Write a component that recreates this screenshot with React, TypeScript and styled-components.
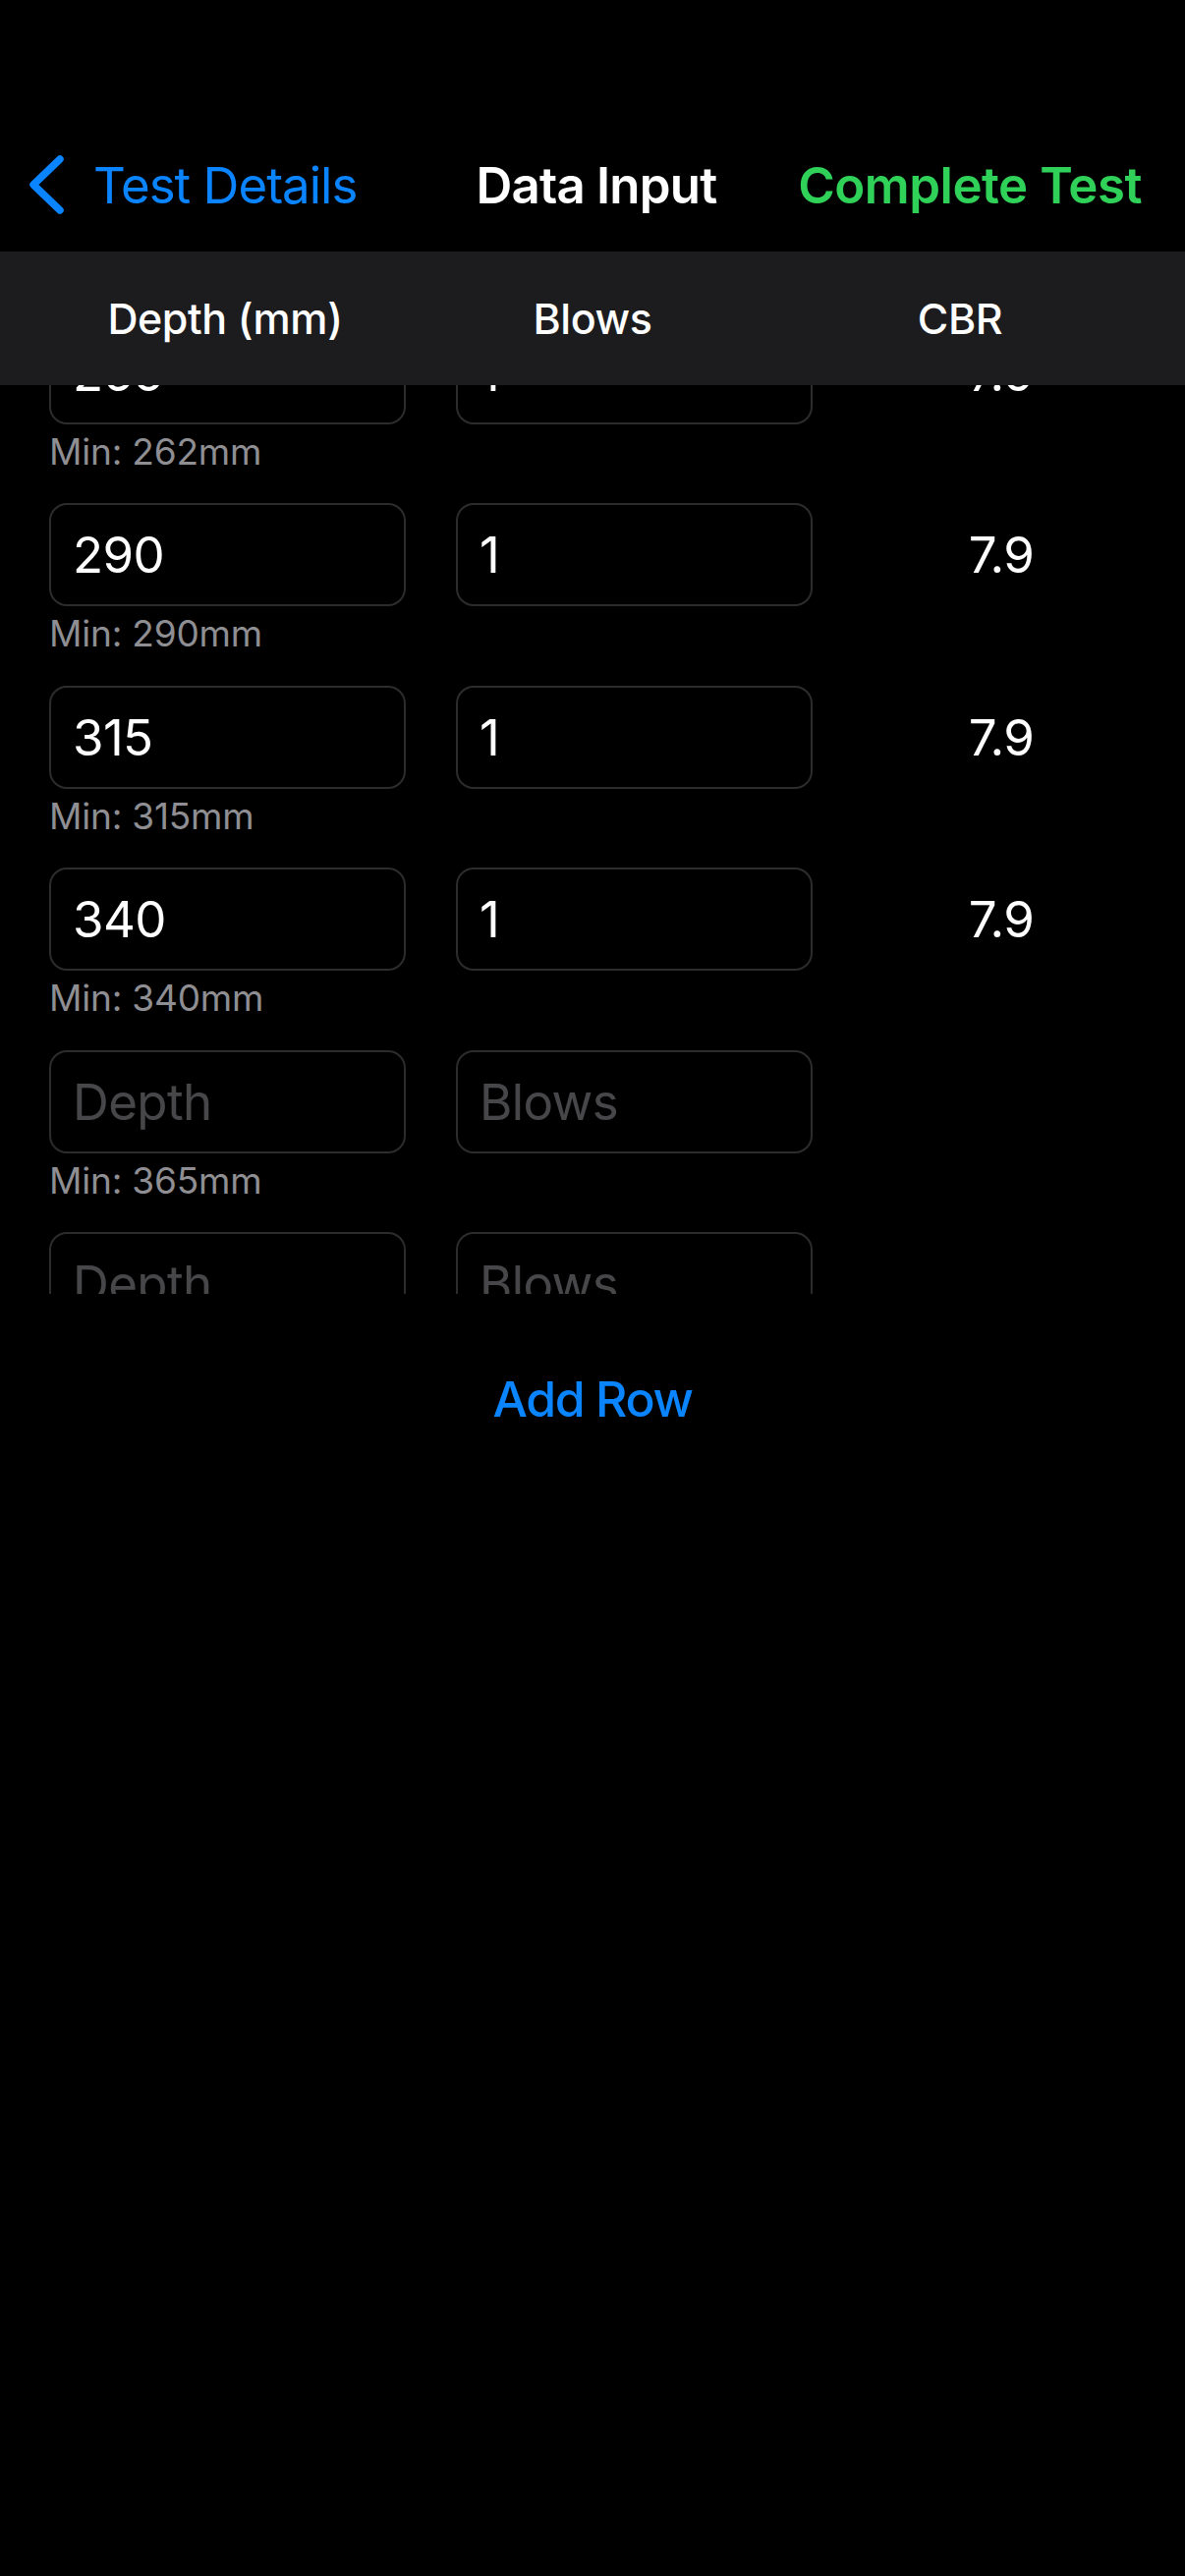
import React, { useLayoutEffect, useRef } from "react";
import styled, { createGlobalStyle } from "styled-components";

const GlobalStyle = createGlobalStyle`
  html, body {
    margin: 0;
    padding: 0;
    background: #000000;
  }
  body {
    font-family: Inter, "Noto Sans", "Liberation Sans", sans-serif;
    color: #ffffff;
    -webkit-font-smoothing: antialiased;
  }
  * { box-sizing: border-box; }
`;

const Screen = styled.div`
  width: 1206px;
  min-height: 2622px;
  background: #000000;
  display: flex;
  flex-direction: column;
`;

const NavBar = styled.div`
  padding: 132px 29px 12px 29px;
  height: 256px;
  display: grid;
  grid-template-columns: 1fr auto 1fr;
  align-items: center;
`;

const BackButton = styled.button`
  justify-self: start;
  display: flex;
  align-items: center;
  gap: 28px;
  background: none;
  border: none;
  padding: 0;
  color: #0a84ff;
  font-family: inherit;
  font-size: 51px;
  font-weight: 400;
  letter-spacing: -1px;
  cursor: pointer;
`;

const Title = styled.div`
  font-size: 51px;
  font-weight: 600;
  letter-spacing: -0.8px;
  color: #ffffff;
  padding-left: 8px;
`;

const ActionButton = styled.button<{ $tone: string }>`
  justify-self: end;
  margin-right: 15px;
  background: none;
  border: none;
  padding: 0;
  color: ${(p) => p.$tone};
  font-family: inherit;
  font-size: 51px;
  font-weight: 600;
  letter-spacing: -0.5px;
  cursor: pointer;
`;

const HeaderBar = styled.div`
  height: 136px;
  background: #1c1c1e;
  padding: 0 42px;
  display: grid;
  grid-template-columns: repeat(3, 1fr);
  align-items: center;
`;

const HeaderCell = styled.div`
  text-align: center;
  font-size: 43px;
  font-weight: 500;
  letter-spacing: -0.4px;
  color: #ffffff;
`;

const ScrollArea = styled.div`
  height: 925px;
  overflow: hidden;
`;

const ListContent = styled.div`
  padding-top: 48.5px;
`;

const Row = styled.div`
  display: grid;
  grid-template-columns: 363px 363px 1fr;
  column-gap: 51px;
  row-gap: 6px;
  padding: 0 46px 31.5px 50px;
`;

const Field = styled.input`
  height: 105px;
  width: 100%;
  background: #000000;
  border: 2px solid #2c2c2e;
  border-radius: 18px;
  padding: 0 22px;
  font-family: inherit;
  font-size: 51px;
  font-weight: 400;
  letter-spacing: -0.6px;
  color: #ffffff;
  outline: none;
  &::placeholder {
    color: rgba(235, 235, 245, 0.3);
  }
`;

const CbrValue = styled.div`
  display: flex;
  align-items: center;
  justify-content: center;
  font-size: 51px;
  font-weight: 400;
  letter-spacing: -0.6px;
  color: #ffffff;
`;

const MinLabel = styled.div`
  grid-column: 1;
  font-size: 37px;
  line-height: 43px;
  color: #8e8e93;
  letter-spacing: -0.2px;
`;

const AddRowButton = styled.button`
  align-self: center;
  margin-top: 76px;
  background: none;
  border: none;
  padding: 0;
  color: #0a84ff;
  font-family: inherit;
  font-size: 50px;
  font-weight: 500;
  letter-spacing: -1.4px;
  line-height: 62px;
  cursor: pointer;
`;

const Chevron = () => (
  <svg width="38" height="60" viewBox="0 0 38 60" fill="none">
    <path
      d="M32 4 L5 30 L32 56"
      stroke="#0a84ff"
      strokeWidth="7.5"
      strokeLinecap="round"
      strokeLinejoin="round"
    />
  </svg>
);

type Entry = { depth: string; blows: string; cbr: string; min: number };

const entries: Entry[] = [
  { depth: "265", blows: "1", cbr: "7.9", min: 262 },
  { depth: "290", blows: "1", cbr: "7.9", min: 290 },
  { depth: "315", blows: "1", cbr: "7.9", min: 315 },
  { depth: "340", blows: "1", cbr: "7.9", min: 340 },
  { depth: "", blows: "", cbr: "", min: 365 },
  { depth: "", blows: "", cbr: "", min: 365 },
];

export default function App() {
  const scrollRef = useRef<HTMLDivElement>(null);

  useLayoutEffect(() => {
    if (scrollRef.current) scrollRef.current.scrollTop = 114;
  }, []);

  return (
    <>
      <GlobalStyle />
      <Screen>
        <NavBar>
          <BackButton>
            <Chevron />
            Test Details
          </BackButton>
          <Title>Data Input</Title>
          <ActionButton $tone="#30d158">Complete Test</ActionButton>
        </NavBar>
        <HeaderBar>
          <HeaderCell>Depth (mm)</HeaderCell>
          <HeaderCell>Blows</HeaderCell>
          <HeaderCell>CBR</HeaderCell>
        </HeaderBar>
        <ScrollArea ref={scrollRef}>
          <ListContent>
            {entries.map((e, i) => (
              <Row key={i}>
                <Field defaultValue={e.depth} placeholder="Depth" inputMode="numeric" />
                <Field defaultValue={e.blows} placeholder="Blows" inputMode="numeric" />
                <CbrValue>{e.cbr}</CbrValue>
                <MinLabel>Min: {e.min}mm</MinLabel>
              </Row>
            ))}
          </ListContent>
        </ScrollArea>
        <AddRowButton>Add Row</AddRowButton>
      </Screen>
    </>
  );
}
